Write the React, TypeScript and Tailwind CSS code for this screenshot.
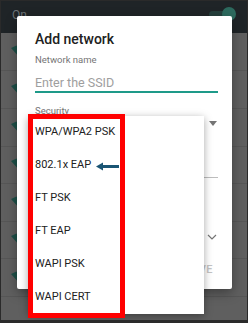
import React from "react";

function Wifi() {
  return (
    <svg width="20" height="14" viewBox="0 0 20 14" className="shrink-0">
      <path d="M0 3 Q10 -3 20 3 L10 14 Z" fill="#1e5048" />
    </svg>
  );
}

const rows = [38, 38, 38, 37, 38, 37, 38];

export default function App() {
  const items = ["WPA/WPA2 PSK", "802.1x EAP", "FT PSK", "FT EAP", "WAPI PSK", "WAPI CERT"];
  return (
    <div
      className="relative w-[248px] h-[323px] overflow-hidden bg-[#5f5f5f] border-l border-r border-t border-b-[3px] border-[#2a2a2a]"
      style={{ fontFamily: "Roboto, 'Noto Sans', Arial, sans-serif" }}
    >
      {/* background app */}
      <div className="h-[32px] bg-[#1f2427] flex items-start justify-between pl-[11px] pr-[12px] pt-[7px]">
        <span className="text-[12px] leading-[14px] text-[#6d7377]">On</span>
        <div className="relative w-[26px] h-[13px] flex items-center">
          <div className="w-[24px] h-[7px] rounded-full bg-[#253f3c]" />
          <div className="absolute right-[-1px] top-[-1px] w-[14px] h-[14px] rounded-full bg-[#2d6a5e]" />
        </div>
      </div>
      {rows.map((h, i) => (
        <div
          key={i}
          className="flex items-center pl-[10px] border-b border-[#565656]"
          style={{ height: h }}
        >
          <Wifi />
        </div>
      ))}

      {/* dialog */}
      <div className="absolute left-[16px] top-[15px] w-[215px] h-[273px] bg-white rounded-[2px] shadow-[0_4px_12px_rgba(0,0,0,0.35)] flex flex-col pl-[18px] pr-[14px] pt-[13px]">
        <div className="text-[14px] leading-[20px] font-medium text-[#212121]">Add network</div>
        <div className="mt-[5px] text-[9.5px] leading-[12px] text-[#757575]">Network name</div>
        <div className="mt-[8.5px] text-[12.5px] leading-[16px] text-[#9e9e9e] border-b-2 border-[#1e9a89]">
          Enter the SSID
        </div>
        <div className="mt-[12px] text-[9.5px] leading-[12px] text-[#757575]">Security</div>
        <div className="h-[14px] flex items-center justify-end pr-[1px]">
          <svg width="8" height="5" viewBox="0 0 8 5">
            <path d="M0 0 H8 L4 5 Z" fill="#757575" />
          </svg>
        </div>
        <div className="h-[47px] border-b border-[#bdbdbd]" />
        <div className="mt-[51px] h-[16px] flex items-center justify-end pr-[1px]">
          <svg width="10" height="6" viewBox="0 0 10 6">
            <path d="M1 1 L5 5 L9 1" stroke="#757575" strokeWidth="1.2" fill="none" />
          </svg>
        </div>
        <div className="mt-[18px] h-[16px] flex items-center justify-end pr-[5px] gap-[16px]">
          <span className="text-[11px] font-medium tracking-[0.5px] text-[#c4c4c4]">CANCEL</span>
          <span className="text-[11px] font-medium tracking-[0.5px] text-[#c4c4c4]">SAVE</span>
        </div>
      </div>

      {/* dropdown menu */}
      <div className="absolute left-[27px] top-[115px] w-[176px] h-[198px] bg-white shadow-[0_2px_8px_rgba(0,0,0,0.35)] flex flex-col">
        {items.map((t) => (
          <div key={t} className="h-[33px] flex items-center pl-[7px] text-[11px] text-[#212121]">
            {t}
          </div>
        ))}
      </div>

      {/* annotation */}
      <div className="absolute left-[27px] top-[113px] w-[97px] h-[204px] border-[5px] border-[#ff0000]" />
      <svg className="absolute left-[95px] top-[161px]" width="23" height="9" viewBox="0 0 23 9">
        <path d="M0 4.5 L7 0.5 L7 3 L23 3 L23 6 L7 6 L7 8.5 Z" fill="#1a5574" />
      </svg>
    </div>
  );
}
